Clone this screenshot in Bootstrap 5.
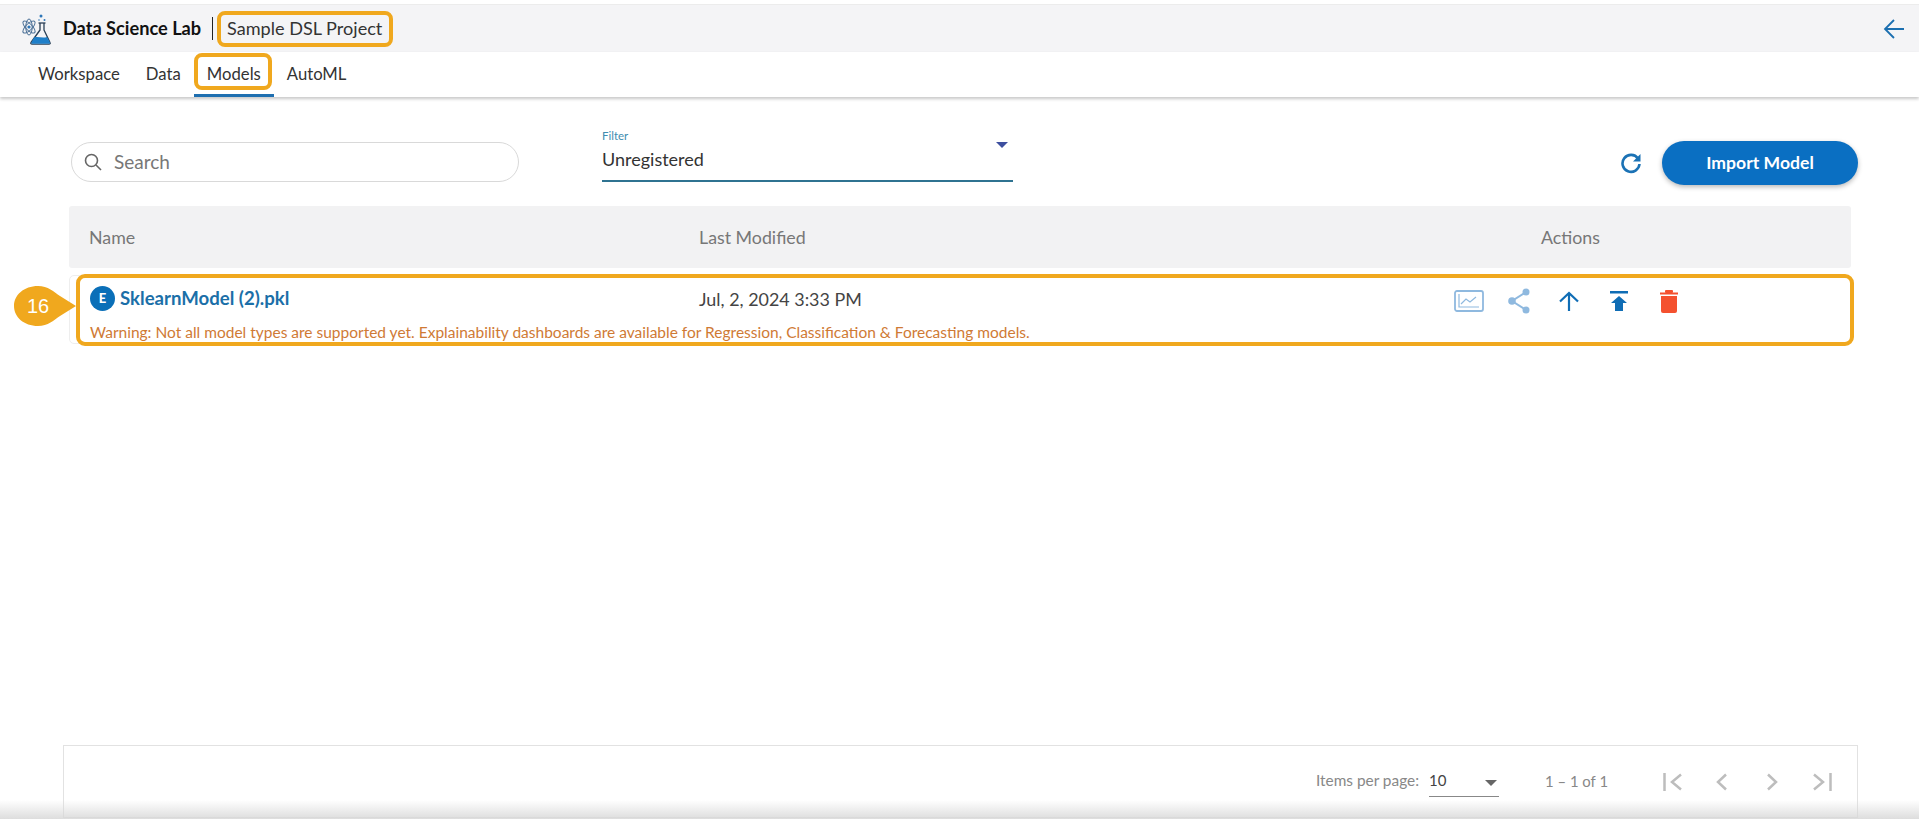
<!DOCTYPE html>
<html lang="en">
<head>
<meta charset="utf-8">
<title>Data Science Lab</title>
<link rel="stylesheet" href="https://cdn.jsdelivr.net/npm/bootstrap@5.3.0/dist/css/bootstrap.min.css">
<style>
html,body{height:100%;overflow:hidden}
body{font-family:"Lato","Noto Sans",sans-serif;color:#222;background:#fff;position:relative}
.shell{height:819px}
.topband{margin-top:4px;height:48px;background:#f4f4f6;border-top:1px solid #ececec;padding-left:20px;padding-right:14px}
.brand-title{font-size:18.2px;font-weight:700;color:#111;margin-left:11px;width:140px;white-space:nowrap}
.brand-sep{width:1px;height:23px;background:#222;margin-left:9px;margin-right:4px}
.mark-box{border:4px solid #f0a81e;border-radius:8px}
.project-box{height:36px;padding:0 6px;width:176px;font-size:18.1px;color:#333;white-space:nowrap}
.tabband{height:45px;padding-left:25px;box-shadow:0 2px 3px rgba(0,0,0,.22);position:relative;z-index:2}
.tab-item{font-size:16.7px;color:#333;text-decoration:none;padding:0 13px;height:45px;position:relative;white-space:nowrap}
.tab-on::after{content:"";position:absolute;left:0;right:0;bottom:0;height:3px;background:#1f6fb0}
.tab-on .mark-box{position:absolute;left:0;right:2px;top:1px;height:37px}
.work{padding:0 61px 0 69px}
.toolrow{height:109px}
.search-pill{margin-left:2px;width:448px;height:40px;border:1px solid #d9d9d9;border-radius:20px;padding-left:12px;margin-top:45px;color:#777;font-size:19px}
.filter-wrap{margin-left:83px;width:411px;margin-top:32px;height:53px;border-bottom:2px solid #2f7391;position:relative}
.filter-label{font-size:11.5px;color:#3f8db0;line-height:14px}
.filter-value{font-size:18px;color:#333;line-height:22px;margin-top:5px}
.filter-caret{position:absolute;right:5px;top:13px;width:0;height:0;border-left:6px solid transparent;border-right:6px solid transparent;border-top:6px solid #3d4f9f}
.tool-end{margin-left:auto;margin-top:44px;height:44px}
.import-btn{width:196px;height:44px;border-radius:22px;background:#0a6fc2;color:#fff;font-weight:700;font-size:17.6px;border:0;margin-left:20px;box-shadow:0 2px 5px rgba(0,0,0,.28)}
.head-row{height:62px;background:#f2f2f3;border-radius:3px;color:#777;font-size:17.800px;margin-right:7px}
.col-name{width:630px;padding-left:20px;flex:none}
.col-date{width:630px;flex:none}
.col-acts{margin-left:212px;flex:none}
.row-shell{margin-top:7px;height:69px;border:1px solid #eee;border-radius:5px;position:relative;margin-right:7px}
.row-mark{position:absolute;left:6px;right:-4px;top:-2px;bottom:-3px;border:4px solid #f0a81e;border-radius:9px;padding:9px 0 0 10px}
.row-main{height:28px}
.row-name{width:609px;flex:none;color:#1b6fa8;font-size:18.600px;font-weight:700;white-space:nowrap;margin-top:-4px}
.e-badge{width:25px;height:25px;border-radius:50%;background:#0a6fb8;color:#fff;font-size:13px;font-weight:900;margin-right:5px}
.row-date{width:755px;flex:none;font-size:17.900px;color:#444;white-space:nowrap;margin-top:-3px}
.warn-text{font-size:15.500px;color:#cf7a35;margin-top:9px;line-height:16px;white-space:nowrap}
.callout{position:absolute;left:14px;top:286px;width:62px;height:40px;z-index:3}
.callout-num{position:absolute;left:0;top:0;width:48px;height:40px;color:#fff;font-family:"Liberation Sans",sans-serif;font-size:20px}
.pager{height:73px;margin:0 61px 1px 63px;border:1px solid #e2e2e2;padding-right:25px;color:#888;font-size:15.400px}
.per-label{margin-top:-1px;white-space:nowrap}
.per-select{width:70px;height:28px;border-bottom:1px solid #888;margin-left:10px;color:#444;font-size:15px;position:relative;margin-top:2px}
.per-caret{position:absolute;right:2px;top:11px;width:0;height:0;border-left:6px solid transparent;border-right:6px solid transparent;border-top:6px solid #666}
.range-text{margin-left:46px;width:62px;margin-right:56px;white-space:nowrap;font-size:14.900px}
.gap-30{margin-left:24px}
.gap-29{margin-left:29px}
.gap-31{margin-left:31px}
.gap-32{margin-left:32px}
.gap-34{margin-left:34px}
.gap-40{margin-left:40px}
.gap-35{margin-left:35px}
.bottom-fade{position:absolute;left:0;right:0;bottom:0;height:19px;background:linear-gradient(to bottom,rgba(215,215,215,0),rgba(215,215,215,.85));pointer-events:none;z-index:4}
</style>
</head>
<body>
<div class="shell d-flex flex-column">
  <header class="topband d-flex align-items-center flex-none">
    <svg width="32" height="32" viewBox="0 0 32 32" fill="none" aria-hidden="true">
      <g stroke="#4a6f96" stroke-width="1"><ellipse cx="9" cy="14" rx="8" ry="3.2" transform="rotate(45 9 14)"/><ellipse cx="9" cy="14" rx="8" ry="3.2" transform="rotate(-45 9 14)"/><ellipse cx="9" cy="14" rx="8" ry="3.2" transform="rotate(90 9 14)"/></g>
      <circle cx="9" cy="14" r="1.6" fill="#2d76b8"/>
      <path d="M20 10v7L11 29.5c-.6 1 0 1.7 1 1.7h17c1 0 1.6-.8 1-1.7L24 17v-7" stroke="#2a3f55" stroke-width="1.3" stroke-linejoin="round"/>
      <path d="M18.500 10h7" stroke="#2a3f55" stroke-width="1.3"/>
      <path d="M14 24.500c4-1.500 8 1 13-.5l3 5.200c.4.900 0 1.500-1 1.500H12.500c-1 0-1.500-.7-1-1.500z" fill="#1f7fc9"/>
      <circle cx="21" cy="3" r="1.500" fill="#2d76b8"/><circle cx="24.500" cy="7" r="1" fill="#2d76b8"/><circle cx="19" cy="7" r=".8" fill="#2d76b8"/>
    </svg>
    <span class="brand-title">Data Science Lab</span>
    <span class="brand-sep"></span>
    <span class="mark-box project-box d-flex align-items-center">Sample DSL Project</span>
    <svg class="ms-auto" width="22" height="22" viewBox="0 0 22 22" fill="none" stroke="#1b6fb0" stroke-width="1.800" aria-hidden="true"><path d="M21 11H2M11 2l-9 9 9 9"/></svg>
  </header>
  <nav class="tabband d-flex">
    <a class="tab-item d-flex align-items-center" href="#">Workspace</a>
    <a class="tab-item d-flex align-items-center" href="#">Data</a>
    <a class="tab-item tab-on d-flex align-items-center" href="#"><span class="mark-box"></span>Models</a>
    <a class="tab-item d-flex align-items-center" href="#">AutoML</a>
  </nav>
  <main class="work flex-grow-1">
    <div class="toolrow d-flex align-items-start">
      <div class="search-pill d-flex align-items-center gap-2">
        <svg width="18" height="18" viewBox="0 0 18 18" fill="none" stroke="#666" stroke-width="1.600" aria-hidden="true"><circle cx="7.500" cy="7.500" r="6"/><path d="M12 12l5 5"/></svg>
        <span class="ms-1">Search</span>
      </div>
      <div class="filter-wrap">
        <div class="filter-label">Filter</div>
        <div class="filter-value">Unregistered</div>
        <span class="filter-caret"></span>
      </div>
      <div class="tool-end d-flex align-items-center">
        <svg width="22" height="22" viewBox="0 0 22 22" fill="none" aria-hidden="true"><path d="M18 6.500A8.500 8.500 0 1 0 19.500 12" stroke="#1b72b5" stroke-width="2.600"/><path d="M20.500 2v7.500H13z" fill="#1b72b5"/></svg>
        <button class="import-btn" type="button">Import Model</button>
      </div>
    </div>
    <div class="head-row d-flex align-items-center">
      <div class="col-name">Name</div>
      <div class="col-date">Last Modified</div>
      <div class="col-acts">Actions</div>
    </div>
    <div class="row-shell">
      <div class="row-mark">
        <div class="row-main d-flex align-items-center">
          <div class="row-name d-flex align-items-center"><span class="e-badge d-flex align-items-center justify-content-center">E</span>SklearnModel (2).pkl</div>
          <div class="row-date">Jul, 2, 2024 3:33 PM</div>
          <div class="d-flex align-items-center">
            <svg width="30" height="22" viewBox="0 0 30 22" fill="none" stroke="#8fb9df" aria-hidden="true"><rect x="1" y="1" width="28" height="20" rx="2" stroke-width="1.800"/><path d="M5 4v13h20" stroke-width="1.200"/><path d="M7 14l5-5 4 3 6-5" stroke-width="1.200"/></svg>
            <svg class="gap-30" width="22" height="26" viewBox="0 0 22 26" aria-hidden="true"><path d="M18 4L4 13l14 9" fill="none" stroke="#8fb9df" stroke-width="2"/><circle cx="18" cy="4" r="3.500" fill="#8fb9df"/><circle cx="4" cy="13" r="3.800" fill="#8fb9df"/><circle cx="18" cy="22" r="3.500" fill="#8fb9df"/></svg>
            <svg class="gap-29" width="20" height="20" viewBox="0 0 20 20" fill="none" stroke="#0f6db5" stroke-width="2.200" aria-hidden="true"><path d="M10 20V2M1 10.500L10 2l9 8.500"/></svg>
            <svg class="gap-31" width="18" height="20" viewBox="0 0 18 20" fill="#0f6db5" aria-hidden="true"><rect x="0" y="0" width="18" height="2.500"/><path d="M9 5l8 7h-4v8H5v-8H1z"/></svg>
            <svg class="gap-32" width="18" height="23" viewBox="0 0 18 23" fill="#f4512f" aria-hidden="true"><rect x="0" y="2.500" width="18" height="2"/><rect x="5" y="0" width="8" height="3" rx="1"/><path d="M1 6h16v15a2 2 0 0 1-2 2H3a2 2 0 0 1-2-2z"/></svg>
          </div>
        </div>
        <div class="warn-text">Warning: Not all model types are supported yet. Explainability dashboards are available for Regression, Classification &amp; Forecasting models.</div>
      </div>
    </div>
  </main>
  <footer class="pager d-flex align-items-center justify-content-end">
    <span class="per-label">Items per page:</span>
    <div class="per-select"><span>10</span><span class="per-caret"></span></div>
    <span class="range-text">1 – 1 of 1</span>
    <svg width="19" height="18" viewBox="0 0 19 18" fill="none" stroke="#bdbdbd" stroke-width="2.500" aria-hidden="true"><path d="M1.500 0v18M18 1.500L9 9l9 7.500"/></svg>
    <svg class="gap-34" width="11" height="18" viewBox="0 0 11 18" fill="none" stroke="#bdbdbd" stroke-width="2.500" aria-hidden="true"><path d="M10 1.500L2 9l8 7.500"/></svg>
    <svg class="gap-40" width="11" height="18" viewBox="0 0 11 18" fill="none" stroke="#bdbdbd" stroke-width="2.500" aria-hidden="true"><path d="M1 1.500L9 9l-8 7.500"/></svg>
    <svg class="gap-35" width="19" height="18" viewBox="0 0 19 18" fill="none" stroke="#bdbdbd" stroke-width="2.500" aria-hidden="true"><path d="M17.500 0v18M1 1.500L10 9l-9 7.500"/></svg>
  </footer>
</div>
<div class="callout">
  <svg width="62" height="40" viewBox="0 0 62 40" aria-hidden="true"><path d="M24 0C34 0 40 6 46 10L62 20 46 30C40 34 34 40 24 40 10 40 0 31 0 20S10 0 24 0z" fill="#f0a81e"/></svg>
  <span class="callout-num d-flex align-items-center justify-content-center">16</span>
</div>
<div class="bottom-fade"></div>
<script src="https://cdn.jsdelivr.net/npm/bootstrap@5.3.0/dist/js/bootstrap.bundle.min.js"></script>
</body>
</html>
